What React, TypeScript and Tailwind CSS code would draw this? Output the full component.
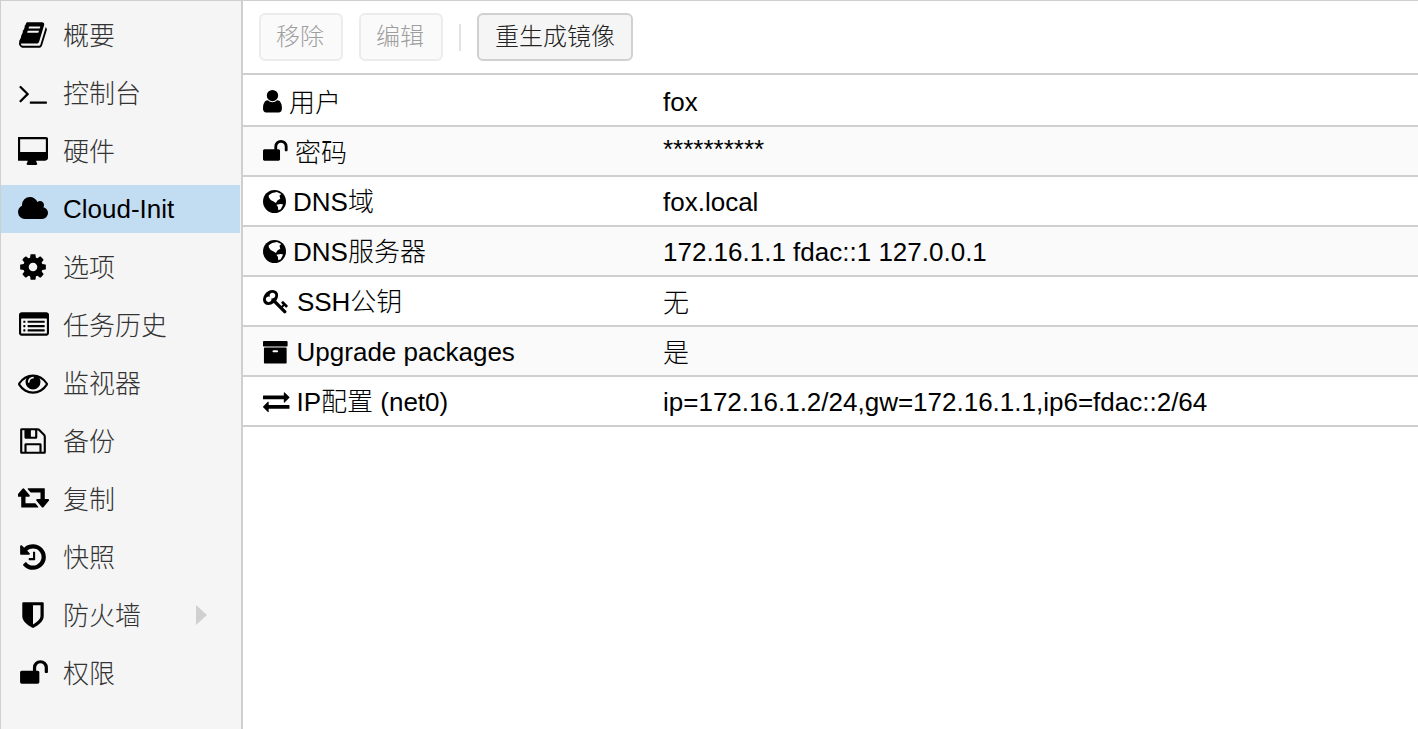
import type { ReactNode } from "react";

const font = "font-['Liberation_Sans','Noto_Sans_CJK_SC',sans-serif]";

// font-awesome 4 glyphs, 1792 units tall
const glyphs = {
  book: "M1639 478q40 57 18 129l-275 906q-19 64-76.5 107.5t-122.5 43.5h-923q-77 0-148.5-53.5t-99.5-131.5q-24-67-2-127 0-4 3-27t4-37q1-8-3-21.5t-3-19.5q2-11 8-21t16.5-23.5 16.5-23.5q23-38 45-91.5t30-91.5q3-10 .5-30t-.5-28q3-11 17-28t17-23q21-36 42-92t25-90q1-9-2.5-32t.5-28q4-13 22-30.5t22-22.5q19-26 42.5-84.5t27.5-96.5q1-8-3-25.5t-2-26.5q2-8 9-18t18-23 17-21q8-12 16.5-30.5t15-35 16-36 19.5-32 26.5-23.5 36-11.5 47.5 5.5l-1 3q38-9 51-9h761q74 0 114 56t18 130l-274 906q-36 119-71.5 153.5t-128.5 34.5h-869q-27 0-38 15-11 16-1 43 24 70 144 70h923q29 0 56-15.5t35-41.5l300-987q7-22 5-57 38 15 59 43zm-1064 2q-4 13 2 22.5t20 9.5h608q13 0 25.5-9.5t16.5-22.5l21-64q4-13-2-22.5t-20-9.5h-608q-13 0-25.5 9.5t-16.5 22.5zm-83 256q-4 13 2 22.5t20 9.5h608q13 0 25.5-9.5t16.5-22.5l21-64q4-13-2-22.5t-20-9.5h-608q-13 0-25.5 9.5t-16.5 22.5z",
  terminal: "M649 983l-466 466q-10 10-23 10t-23-10l-50-50q-10-10-10-23t10-23l393-393-393-393q-10-10-10-23t10-23l50-50q10-10 23-10t23 10l466 466q10 10 10 23t-10 23zm1079 457v64q0 14-9 23t-23 9h-960q-14 0-23-9t-9-23v-64q0-14 9-23t23-9h960q14 0 23 9t9 23z",
  desktop: "M1664 928v-704q0-13-9.5-22.5t-22.5-9.5h-1472q-13 0-22.5 9.5t-9.5 22.5v704q0 13 9.5 22.5t22.5 9.5h1472q13 0 22.5-9.5t9.5-22.5zm128-704v1088q0 66-47 113t-113 47h-544q0 37 16 77.5t32 71 16 43.5q0 26-19 45t-45 19h-512q-26 0-45-19t-19-45q0-14 16-44t32-70 16-78h-544q-66 0-113-47t-47-113v-1088q0-66 47-113t113-47h1632q66 0 113 47t47 113z",
  cloud: "M1728 1152q0 159-112.5 271.5t-271.5 112.5h-1088q-185 0-316.5-131.5t-131.5-316.5q0-132 71-241.5t187-163.5q-2-28-2-43 0-212 150-362t362-150q158 0 286.5 88t187.5 230q70-62 166-62 106 0 181 75t75 181q0 75-41 138 129 30 213 134.5t84 239.5z",
  cog: "M1152 896q0-106-75-181t-181-75-181 75-75 181 75 181 181 75 181-75 75-181zm512-109v222q0 12-8 23t-20 13l-185 28q-19 54-39 91 35 50 107 138 10 12 10 25t-9 23q-27 37-99 108t-94 71q-12 0-26-9l-138-108q-44 23-91 38-16 136-29 186-7 28-36 28h-222q-14 0-24.5-8.5t-11.5-21.5l-28-184q-49-16-90-37l-141 107q-10 9-25 9-14 0-25-11-126-114-165-168-7-10-7-23 0-12 8-23 15-21 51-66.5t54-70.5q-27-50-41-99l-183-27q-13-2-21-12.5t-8-23.5v-222q0-12 8-23t19-13l186-28q14-46 39-92-40-57-107-138-10-12-10-24 0-10 9-23 26-36 98.5-107.5t94.5-71.5q13 0 26 10l138 107q44-23 91-38 16-136 29-186 7-28 36-28h222q14 0 24.5 8.5t11.5 21.5l28 184q49 16 90 37l142-107q9-9 24-9 13 0 25 10 129 119 165 170 7 8 7 22 0 12-8 23-15 21-51 66.5t-54 70.5q26 50 41 98l183 28q13 2 21 12.5t8 23.5z",
  listAlt: "M384 1184v64q0 13-9.5 22.5t-22.5 9.5h-64q-13 0-22.5-9.5t-9.5-22.5v-64q0-13 9.5-22.5t22.5-9.5h64q13 0 22.5 9.5t9.5 22.5zm0-256v64q0 13-9.5 22.5t-22.5 9.5h-64q-13 0-22.5-9.5t-9.5-22.5v-64q0-13 9.5-22.5t22.5-9.5h64q13 0 22.5 9.5t9.5 22.5zm0-256v64q0 13-9.5 22.5t-22.5 9.5h-64q-13 0-22.5-9.5t-9.5-22.5v-64q0-13 9.5-22.5t22.5-9.5h64q13 0 22.5 9.5t9.5 22.5zm1152 512v64q0 13-9.5 22.5t-22.5 9.5h-960q-13 0-22.5-9.5t-9.5-22.5v-64q0-13 9.5-22.5t22.5-9.5h960q13 0 22.5 9.5t9.5 22.5zm0-256v64q0 13-9.5 22.5t-22.5 9.5h-960q-13 0-22.5-9.5t-9.5-22.5v-64q0-13 9.5-22.5t22.5-9.5h960q13 0 22.5 9.5t9.5 22.5zm0-256v64q0 13-9.5 22.5t-22.5 9.5h-960q-13 0-22.5-9.5t-9.5-22.5v-64q0-13 9.5-22.5t22.5-9.5h960q13 0 22.5 9.5t9.5 22.5zm128 704v-832q0-13-9.5-22.5t-22.5-9.5h-1472q-13 0-22.5 9.5t-9.5 22.5v832q0 13 9.5 22.5t22.5 9.5h1472q13 0 22.5-9.5t9.5-22.5zm128-1088v1088q0 66-47 113t-113 47h-1472q-66 0-113-47t-47-113v-1088q0-66 47-113t113-47h1472q66 0 113 47t47 113z",
  eye: "M1664 960q-152-236-381-353 61 104 61 225 0 185-131.5 316.5t-316.5 131.5-316.5-131.5-131.5-316.5q0-121 61-225-229 117-381 353 133 205 333.5 326.5t434.5 121.5 434.5-121.5 333.5-326.5zm-720-384q0-20-14-34t-34-14q-125 0-214.5 89.5t-89.5 214.5q0 20 14 34t34 14 34-14 14-34q0-86 61-147t147-61q20 0 34-14t14-34zm848 384q0 34-20 69-140 230-376.5 368.5t-499.5 138.5-499.5-139-376.5-368q-20-35-20-69t20-69q140-229 376.5-368t499.5-139 499.5 139 376.5 368q20 35 20 69z",
  save: "M512 1536h768v-384h-768v384zm896 0h128v-896q0-14-10-38.5t-20-34.5l-281-281q-10-10-34-20t-39-10v416q0 40-28 68t-68 28h-576q-40 0-68-28t-28-68v-416h-128v1280h128v-416q0-40 28-68t68-28h832q40 0 68 28t28 68v416zm-384-928v-320q0-13-9.5-22.5t-22.5-9.5h-192q-13 0-22.5 9.5t-9.5 22.5v320q0 13 9.5 22.5t22.5 9.5h192q13 0 22.5-9.5t9.5-22.5zm640 32v928q0 40-28 68t-68 28h-1344q-40 0-68-28t-28-68v-1344q0-40 28-68t68-28h928q40 0 88 20t76 48l280 280q28 28 48 76t20 88z",
  retweet: "M1216 1376q0 13-9.5 22.5t-22.5 9.5h-960q-8 0-13.5-2t-9-7-5.5-8-3-11.5-1-11.5v-600h-192q-26 0-45-19t-19-45q0-24 15-41l320-384q19-22 49-22t49 22l320 384q15 17 15 41 0 26-19 45t-45 19h-192v384h576q16 0 25 11l160 192q7 10 7 21zm640-416q0 24-15 41l-320 384q-20 23-49 23t-49-23l-320-384q-15-17-15-41 0-26 19-45t45-19h192v-384h-576q-16 0-25-12l-160-192q-7-9-7-20 0-13 9.5-22.5t22.5-9.5h960q8 0 13.5 2t9 7 5.5 8 3 11.5 1 11.5v600h192q26 0 45 19t19 45z",
  history: "M1664 896q0 156-61 298t-164 245-245 164-298 61q-172 0-327-72.5t-264-204.5q-7-10-6.5-22.5t8.5-20.5l137-138q10-9 25-9 16 2 23 12 73 95 179 147t225 52q104 0 198.5-40.5t163.5-109.5 109.5-163.5 40.5-198.5-40.5-198.5-109.5-163.5-163.5-109.5-198.5-40.5q-98 0-188 35.5t-160 101.5l137 138q31 30 14 69-17 40-59 40h-448q-26 0-45-19t-19-45v-448q0-42 40-59 39-17 69 14l130 129q107-101 244.5-156.5t284.5-55.5q156 0 298 61t245 164 164 245 61 298zm-640-288v448q0 14-9 23t-23 9h-320q-14 0-23-9t-9-23v-64q0-14 9-23t23-9h224v-352q0-14 9-23t23-9h64q14 0 23 9t9 23z",
  shield: "M1344 960v-640h-448v1137q119-63 213-137 235-184 235-360zm192-768v768q0 86-33.5 170.5t-83 150-118 127.5-126.5 103-121 77.5-89.5 49.5-42.5 20q-12 6-26 6t-26-6q-16-7-42.5-20t-89.5-49.5-121-77.5-126.5-103-118-127.5-83-150-33.5-170.5v-768q0-26 19-45t45-19h1152q26 0 45 19t19 45z",
  unlock: "M1728 576v256q0 26-19 45t-45 19h-64q-26 0-45-19t-19-45v-256q0-106-75-181t-181-75-181 75-75 181v192h96q40 0 68 28t28 68v576q0 40-28 68t-68 28h-960q-40 0-68-28t-28-68v-576q0-40 28-68t68-28h672v-192q0-185 131.5-316.5t316.5-131.5 316.5 131.5 131.5 316.5z",
  user: "M1536 1399q0 109-62.5 187t-150.5 78h-854q-88 0-150.5-78t-62.5-187q0-85 8.5-160.5t31.5-151.5 58.5-130 94-88.5 134.5-34.5q131 128 313 128t313-128q76 0 134.5 34.5t94 88.5 58.5 130 31.5 151.5 8.5 160.5zm-256-887q0 159-112.5 271.5t-271.5 112.5-271.5-112.5-112.5-271.5 112.5-271.5 271.5-112.5 271.5 112.5 112.5 271.5z",
  key: "M832 512q0-80-56-136t-136-56-136 56-56 136q0 42 19 83-41-19-83-19-80 0-136 56t-56 136 56 136 136 56 136-56 56-136q0-42-19-83 41 19 83 19 80 0 136-56t56-136zm851 704q0 17-49 66t-66 49q-9 0-28.5-16t-36.5-33-38.5-40-24.5-26l-96 96 220 220q28 28 28 68 0 42-39 81t-81 39q-40 0-68-28l-671-671q-176 131-365 131-163 0-265.5-102.5t-102.5-265.5q0-160 95-313t248-248 313-95q163 0 265.5 102.5t102.5 265.5q0 189-131 365l355 355 96-96q-3-3-26-24.5t-40-38.5-33-36.5-16-28.5q0-17 49-66t66-49q13 0 23 10 6 6 46 44.5t82 79.5 86.5 86 73 78 28.5 41z",
  archive: "M1088 832q0-26-19-45t-45-19h-256q-26 0-45 19t-19 45 19 45 45 19h256q26 0 45-19t19-45zm576-192v960q0 26-19 45t-45 19h-1408q-26 0-45-19t-19-45v-960q0-26 19-45t45-19h1408q26 0 45 19t19 45zm64-448v256q0 26-19 45t-45 19h-1536q-26 0-45-19t-19-45v-256q0-26 19-45t45-19h1536q26 0 45 19t19 45z",
  exchange: "M1792 1184v192q0 13-9.5 22.5t-22.5 9.5h-1376v192q0 13-9.5 22.5t-22.5 9.5q-12 0-24-10l-319-320q-9-9-9-22 0-14 9-23l320-320q9-9 23-9 13 0 22.5 9.5t9.5 22.5v192h1376q13 0 22.5 9.5t9.5 22.5zm0-544q0 14-9 23l-320 320q-9 9-23 9-13 0-22.5-9.5t-9.5-22.5v-192h-1376q-13 0-22.5-9.5t-9.5-22.5v-192q0-13 9.5-22.5t22.5-9.5h1376v-192q0-14 9-23t23-9q12 0 24 10l319 319q9 9 9 23z",
};

function Fa({ d, x = 0, w = 1792, size }: { d: string; x?: number; w?: number; size: number }) {
  return (
    <svg viewBox={`${x} 0 ${w} 1792`} fill="currentColor" className="block shrink-0" style={{ height: size, width: (w / 1792) * size }}>
      <path d={d} />
    </svg>
  );
}

function Globe() {
  return (
    <svg viewBox="0 0 24 24" className="block h-[23px] w-[23px] shrink-0">
      <circle cx="12" cy="12" r="12" fill="#000" />
      <path fill="#fff" d="M6 5.5 9.5 3l5-.8 4.5 2-1.8 1.8.8 3-3 2-1.5 2.5-2.5-1.500-3-1.500-2-3zM14 15.500l4.500-1 2.500.5-2.500 5-2.500 1-.5-3.500z" />
    </svg>
  );
}

const navItems: { label: string; icon: ReactNode; shift?: string; active?: boolean }[] = [
  { label: "概要", icon: <Fa d={glyphs.book} size={30} />, shift: "ml-[2px]" },
  { label: "控制台", icon: <Fa d={glyphs.terminal} size={30} /> },
  { label: "硬件", icon: <Fa d={glyphs.desktop} size={30} /> },
  { label: "Cloud-Init", icon: <Fa d={glyphs.cloud} x={-192} w={1920} size={28} />, active: true },
  { label: "选项", icon: <Fa d={glyphs.cog} size={30} /> },
  { label: "任务历史", icon: <Fa d={glyphs.listAlt} size={30} />, shift: "ml-[1px]" },
  { label: "监视器", icon: <Fa d={glyphs.eye} size={30} /> },
  { label: "备份", icon: <Fa d={glyphs.save} size={30} /> },
  { label: "复制", icon: <Fa d={glyphs.retweet} w={1920} size={30} />, shift: "ml-[2px]" },
  { label: "快照", icon: <Fa d={glyphs.history} size={30} /> },
  { label: "防火墙", icon: <Fa d={glyphs.shield} size={30} /> },
  { label: "权限", icon: <Fa d={glyphs.unlock} size={30} />, shift: "ml-[1px]" },
];

const rows: { icon: ReactNode; label: string; value: string; gap: string; labelPad: string; valuePad: string }[] = [
  { icon: <span className="mt-[2px]"><Fa d={glyphs.user} x={256} w={1280} size={26.5} /></span>, label: "用户", value: "fox", gap: "gap-[7px]", labelPad: "pt-[6px]", valuePad: "pt-[4px]" },
  { icon: <Fa d={glyphs.unlock} x={64} w={1664} size={26.5} />, label: "密码", value: "**********", gap: "gap-[7.5px]", labelPad: "pt-[4px]", valuePad: "pb-[4px]" },
  { icon: <Globe />, label: "DNS域", value: "fox.local", gap: "gap-[7px]", labelPad: "pt-[2px]", valuePad: "pt-[2px]" },
  { icon: <Globe />, label: "DNS服务器", value: "172.16.1.1 fdac::1 127.0.0.1", gap: "gap-[7px]", labelPad: "pt-[2px]", valuePad: "pt-[2px]" },
  { icon: <Fa d={glyphs.key} x={0} w={1683} size={26.5} />, label: "SSH公钥", value: "无", gap: "gap-[9px]", labelPad: "pt-[2px]", valuePad: "pt-[4px]" },
  { icon: <span className="mt-[2px]"><Fa d={glyphs.archive} x={64} w={1664} size={26.5} /></span>, label: "Upgrade packages", value: "是", gap: "gap-[9px]", labelPad: "pt-[2px]", valuePad: "pt-[4px]" },
  { icon: <Fa d={glyphs.exchange} size={26.5} />, label: "IP配置 (net0)", value: "ip=172.16.1.2/24,gw=172.16.1.1,ip6=fdac::2/64", gap: "gap-[7px]", labelPad: "pt-[2px]", valuePad: "pt-[2px]" },
];

export default function App() {
  return (
    <div className={`flex h-[729px] w-[1418px] overflow-hidden border-t border-[#cfcfcf] bg-white text-[26px] font-light text-black ${font}`}>
      <nav className="flex h-full w-[243px] shrink-0 flex-col gap-[10px] border-r-2 border-l border-[#cfcfcf] bg-[#f5f5f5] pt-[10px] pr-[1px]">
        {navItems.map((item) => (
          <div key={item.label} className={`flex h-[48px] shrink-0 items-center ${item.active ? "bg-[#c2ddf2]" : ""}`}>
            <span className="flex w-[62px] shrink-0 justify-center pl-[2px] text-black">
              <span className={item.shift}>{item.icon}</span>
            </span>
            <span className={item.active ? "" : "pt-[2px] text-[#333]"}>{item.label}</span>
            {item.label === "防火墙" && <span className="ml-[55px] h-0 w-0 border-y-[10px] border-l-[11px] border-y-transparent border-l-[#d0d0d0]" />}
          </div>
        ))}
      </nav>
      <main className="flex min-w-0 flex-1 flex-col">
        <div className="flex h-[74px] shrink-0 items-center gap-[16px] border-b-2 border-[#cfcfcf] px-[16px] text-[24px]">
          <button className="h-[48px] w-[84px] rounded-[6px] border-2 border-[#ececec] bg-[#fafafa] pr-[2px] text-[#9e9e9e]">移除</button>
          <button className="h-[48px] w-[84px] rounded-[6px] border-2 border-[#ececec] bg-[#fafafa] pr-[2px] text-[#9e9e9e]">编辑</button>
          <span className="h-[27px] w-[2px] bg-[#e2e2e2]" />
          <button className="h-[48px] w-[156px] rounded-[6px] border-2 border-[#d0d0d0] bg-[#f5f5f5] text-[#222]">重生成镜像</button>
        </div>
        {rows.map((row, i) => (
          <div key={row.label} className={`flex shrink-0 items-center border-b-2 border-[#cfcfcf] ${i === 0 ? "h-[52px]" : "h-[50px]"} ${i % 2 ? "bg-[#fafafa]" : "bg-white"}`}>
            <span className={`flex w-[420px] shrink-0 items-center pl-[20px] ${row.gap}`}>
              {row.icon}
              <span className={`whitespace-nowrap ${row.labelPad}`}>{row.label}</span>
            </span>
            <span className={`whitespace-nowrap ${row.valuePad}`}>{row.value}</span>
          </div>
        ))}
      </main>
    </div>
  );
}
